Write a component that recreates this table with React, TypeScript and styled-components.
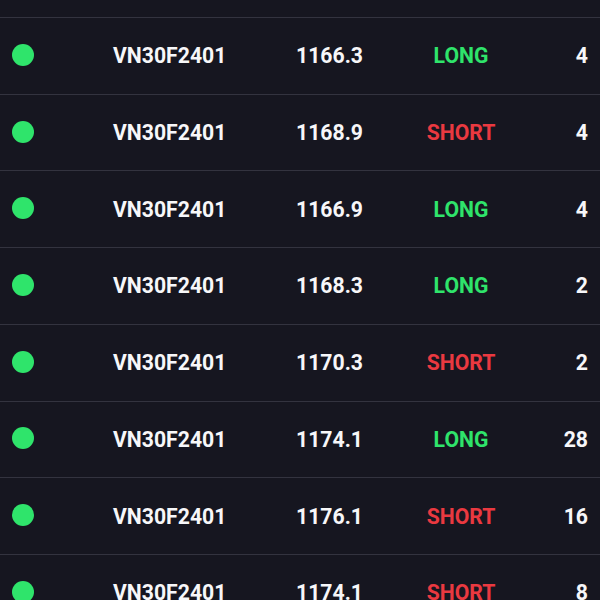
import React from "react";
import styled, { createGlobalStyle } from "styled-components";

const GlobalStyle = createGlobalStyle`
  html, body {
    margin: 0;
    padding: 0;
    background: #161620;
    font-family: Roboto, "Liberation Sans", sans-serif;
  }
`;

const Screen = styled.div`
  width: 600px;
  height: 600px;
  overflow: hidden;
  background: #161620;
`;

// tail of the row scrolled out above
const ScrolledEdge = styled.div`
  box-sizing: border-box;
  height: 18px;
  border-bottom: 1px solid #33333f;
`;

const Row = styled.div`
  box-sizing: border-box;
  height: 76.71px;
  padding: 0 12px;
  display: grid;
  grid-template-columns: 101px 137px 113px 196px 1fr;
  align-items: center;
  border-bottom: 1px solid #33333f;
  color: #f7f7f9;
  font-size: 21.2px;
  font-weight: 700;
`;

const Dot = styled.span`
  width: 22px;
  height: 22px;
  border-radius: 50%;
  background: #2fe46b;
  margin-top: -2px;
`;

const Symbol = styled.span`
  text-align: left;
`;

const Price = styled.span`
  text-align: right;
`;

const Side = styled.span<{ $long: boolean }>`
  text-align: center;
  color: ${(p) => (p.$long ? "#2fe46b" : "#ea3940")};
`;

const Qty = styled.span`
  text-align: right;
`;

const orders = [
  { price: "1166.3", long: true, qty: 4 },
  { price: "1168.9", long: false, qty: 4 },
  { price: "1166.9", long: true, qty: 4 },
  { price: "1168.3", long: true, qty: 2 },
  { price: "1170.3", long: false, qty: 2 },
  { price: "1174.1", long: true, qty: 28 },
  { price: "1176.1", long: false, qty: 16 },
  { price: "1174.1", long: false, qty: 8 },
];

export default function App() {
  return (
    <>
      <GlobalStyle />
      <Screen>
        <ScrolledEdge />
        {orders.map((o, i) => (
          <Row key={i}>
            <Dot />
            <Symbol>VN30F2401</Symbol>
            <Price>{o.price}</Price>
            <Side $long={o.long}>{o.long ? "LONG" : "SHORT"}</Side>
            <Qty>{o.qty}</Qty>
          </Row>
        ))}
      </Screen>
    </>
  );
}
